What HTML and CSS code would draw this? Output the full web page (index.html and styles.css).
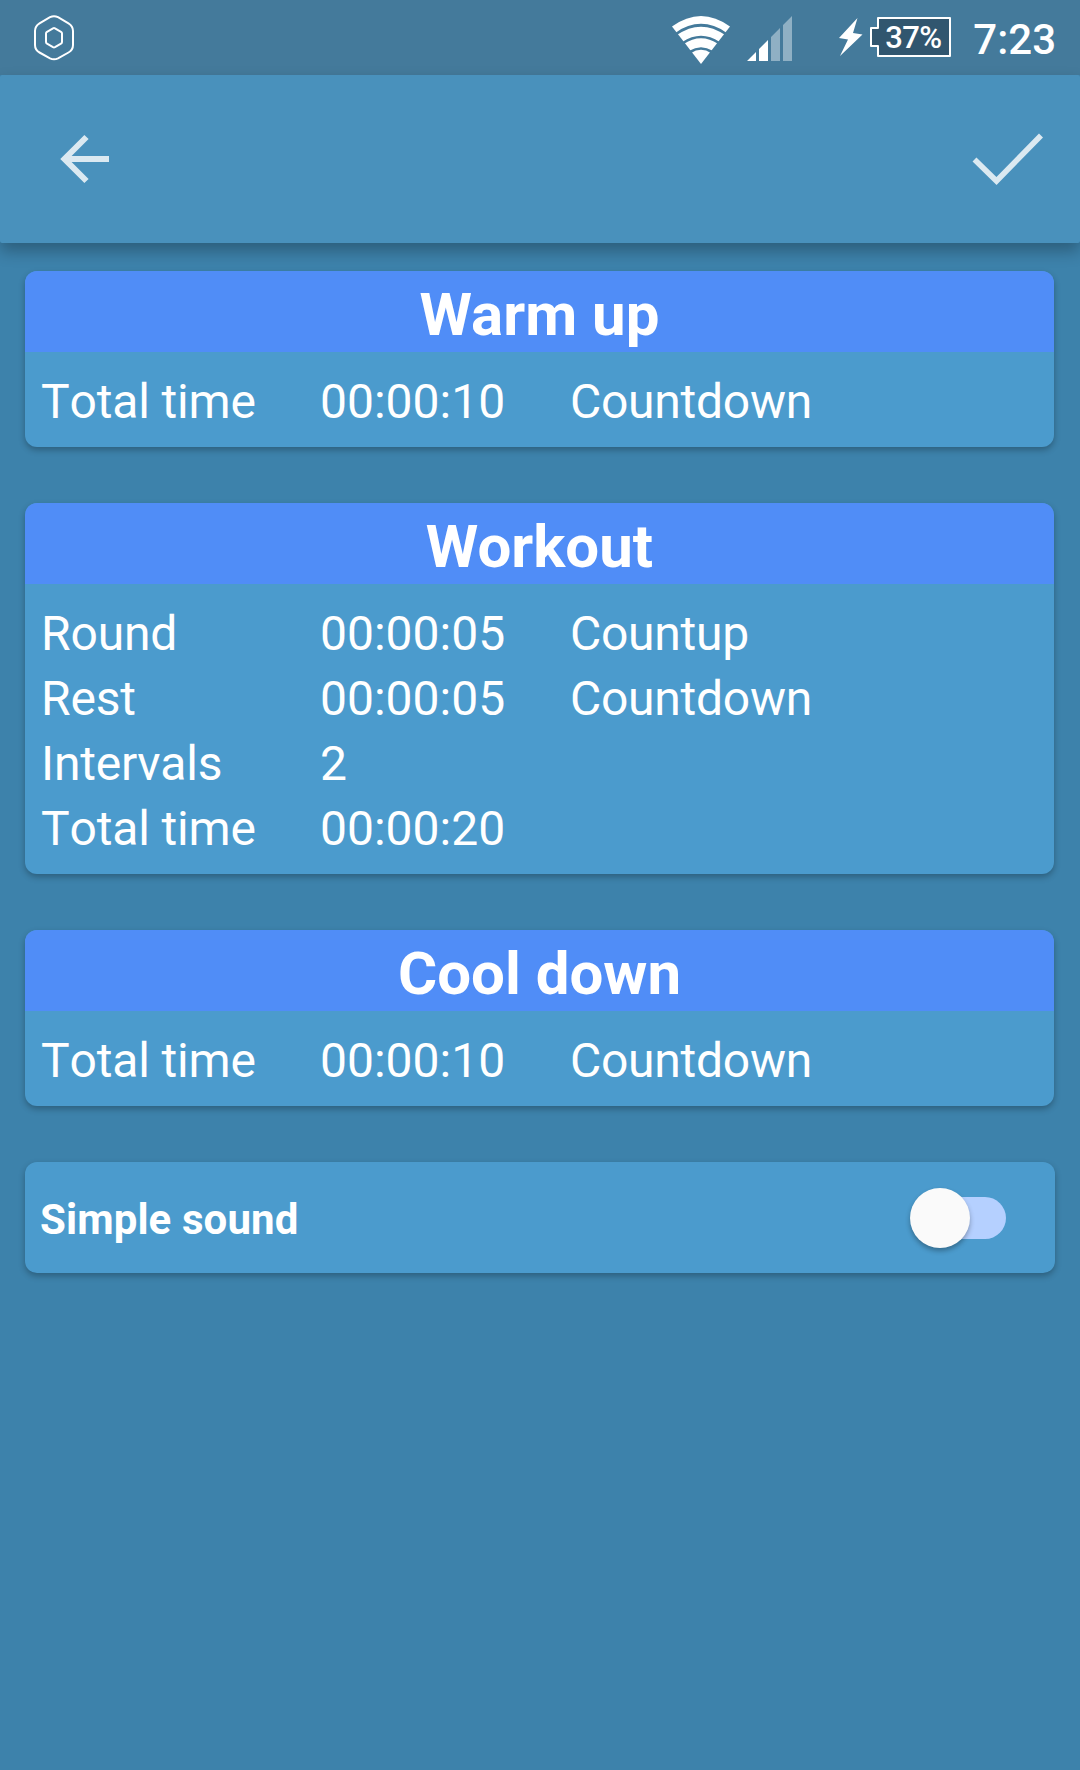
FILE: index.html
```html
<!DOCTYPE html>
<html lang="en">
<head>
<meta charset="utf-8">
<title>Workout summary</title>
<link rel="stylesheet" href="styles.css">
</head>
<body>
<div class="screen">
  <header class="status">
    <svg class="status-app" width="42" height="46" viewBox="0 0 42 46" fill="none" stroke="#fff" stroke-width="2">
      <path d="M17 2.2Q21 .2 25 2.2L35.500 8.300Q40 11 40 16V30Q40 35 35.500 37.500L25 43.300Q21 45.300 17 43.300L6.500 37.500Q2 35 2 30V16Q2 11 6.500 8.300Z"/>
      <path d="M20 13.300q1-.5 2 0l6 3.500q1 .6 1 1.700v8.500q0 1.100-1 1.700l-6 3.500q-1 .5-2 0l-6-3.500q-1-.6-1-1.700v-8.500q0-1.100 1-1.700z"/>
    </svg>
    <div class="status-right">
      <svg class="wifi" width="60" height="50" viewBox="0 0 60 50">
        <path d="M1 11.500Q30-9.500 59 11.500L30 49Z" fill="#fff"/>
        <g fill="none" stroke="#447a9b" stroke-width="2.700">
          <path d="M5 19Q30 1.500 55 19"/>
          <path d="M12 28Q30 16 48 28"/>
          <path d="M19 37Q30 30 41 37"/>
        </g>
      </svg>
      <svg class="signal" width="45" height="46" viewBox="0 0 45 46">
        <path d="M0 45L9 36V45ZM12 33L21 24V45H12Z" fill="#fff"/>
        <path d="M24 21L33 12V45H24ZM36 9L45 0V45H36Z" fill="#8fb0c4"/>
      </svg>
      <svg class="bolt" width="24" height="38" viewBox="0 0 24 38"><path d="M18.500 0L0 20L9 21.500L1 38L23.500 16.500L14 15Z" fill="#fff"/></svg>
      <div class="battery">
        <svg class="battery-shape" width="81" height="40" viewBox="0 0 81 40"><path d="M8 1H80V39H8V29H1V11H8Z" fill="#31566f" stroke="#fff" stroke-width="2" stroke-linejoin="round"/></svg>
        <span class="battery-text">37%</span>
      </div>
      <span class="clock">7:23</span>
    </div>
  </header>

  <nav class="toolbar">
    <svg width="50" height="50" viewBox="0 0 50 50" fill="none" stroke="#dbe9f1" stroke-width="6"><path d="M26.500 3L4.500 25L26.500 47M4.500 25H49"/></svg>
    <svg width="72" height="52" viewBox="0 0 72 52" fill="none" stroke="#dbe9f1" stroke-width="5.600"><path d="M2.500 26.500L24.500 48L69 2.500"/></svg>
  </nav>

  <main class="content">
    <section class="card">
      <h2 class="card-title">Warm up</h2>
      <div class="rows">
        <span class="label">Total time</span><span>00:00:10</span><span class="mode">Countdown</span>
      </div>
    </section>
    <section class="card">
      <h2 class="card-title">Workout</h2>
      <div class="rows">
        <span class="label">Round</span><span>00:00:05</span><span class="mode">Countup</span>
        <span class="label">Rest</span><span>00:00:05</span><span class="mode">Countdown</span>
        <span class="label">Intervals</span><span>2</span><span class="mode"></span>
        <span class="label">Total time</span><span>00:00:20</span><span class="mode"></span>
      </div>
    </section>
    <section class="card">
      <h2 class="card-title">Cool down</h2>
      <div class="rows">
        <span class="label">Total time</span><span>00:00:10</span><span class="mode">Countdown</span>
      </div>
    </section>
    <section class="card setting">
      <span class="setting-label">Simple sound</span>
      <span class="switch"><span class="switch-track"></span><span class="switch-thumb"></span></span>
    </section>
  </main>
</div>
</body>
</html>
```
FILE: styles.css
```css
* { box-sizing: border-box; }

body {
  margin: 0;
  background: #3d82ab;
  color: #fff;
  font-family: Roboto, "Liberation Sans", sans-serif;
}

.screen {
  width: 1080px;
  height: 1770px;
  overflow: hidden;
}

.status {
  display: flex;
  justify-content: space-between;
  height: 75px;
  padding: 15px 24px 0 33px;
  background: #447a9b;
}

.status-right { display: flex; align-items: flex-start; }
.wifi { margin-right: 16px; }
.signal { margin: 1px 47px 0 0; }
.bolt { margin: 3px 7px 0 0; }

.battery {
  position: relative;
  width: 81px;
  height: 40px;
  margin: 2px 22px 0 0;
}
.battery-shape { display: block; }
.battery-text {
  position: absolute;
  top: 1px;
  left: 15px;
  font-size: 31px;
  font-weight: 500;
  line-height: 40px;
  letter-spacing: -.6px;
}

.clock {
  font-size: 42px;
  font-weight: 500;
  line-height: 50px;
}

.toolbar {
  display: flex;
  align-items: center;
  justify-content: space-between;
  height: 168px;
  padding: 0 36px 0 60px;
  border-radius: 2px;
  background: #4991bc;
  box-shadow: 0 8px 16px rgba(0, 0, 0, .28);
}

.content {
  display: flex;
  flex-direction: column;
  gap: 56px;
  padding: 28px 26px 0 25px;
}

.card {
  border-radius: 12px;
  background: #4b9bcd;
  box-shadow: 0 3px 6px rgba(0, 0, 0, .27);
}

.card-title {
  height: 81px;
  margin: 0;
  padding-top: 4px;
  border-radius: 12px 12px 0 0;
  background: #508df7;
  font-size: 60px;
  font-weight: 700;
  line-height: 80px;
  text-align: center;
}

.rows {
  display: grid;
  grid-template-columns: 279px 250px 1fr;
  grid-auto-rows: 65px;
  padding: 17px 16px 13px;
  font-size: 48px;
  line-height: 65px;
}
.label {
  font-kerning: none;
  letter-spacing: -.15px;
}
.mode { letter-spacing: -.25px; }

.setting {
  display: flex;
  align-items: center;
  justify-content: space-between;
  width: 1030px;
  height: 111px;
  padding: 0 49px 0 15px;
}
.setting-label {
  padding-top: 4px;
  font-size: 42px;
  font-weight: 700;
  letter-spacing: .1px;
}

.switch {
  position: relative;
  display: flex;
  align-items: center;
  justify-content: flex-end;
  width: 96px;
  height: 60px;
}
.switch-track {
  width: 84px;
  height: 42px;
  border-radius: 21px;
  background: #b5d0ff;
}
.switch-thumb {
  position: absolute;
  top: 0;
  left: 0;
  width: 60px;
  height: 60px;
  border-radius: 50%;
  background: #fafafa;
  box-shadow: 0 3px 5px rgba(0, 0, 0, .3);
}
```
